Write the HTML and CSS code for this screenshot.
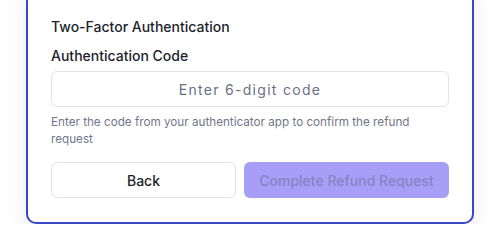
FILE: index.html
```html
<!DOCTYPE html>
<html lang="en">
<head>
  <meta charset="UTF-8">
  <meta name="viewport" content="width=device-width, initial-scale=1.0">
  <title>Two-Factor Authentication</title>
  <link rel="stylesheet" href="styles.css">
</head>
<body>
  <div class="page">
    <div class="card">
      <h3 class="section-title">Two-Factor Authentication</h3>
      <label class="field-label" for="code">Authentication Code</label>
      <input id="code" class="code-input" type="text" placeholder="Enter 6-digit code">
      <p class="help-text">Enter the code from your authenticator app to confirm the refund request</p>
      <div class="actions">
        <button class="btn btn-back">Back</button>
        <button class="btn btn-primary" disabled>Complete Refund Request</button>
      </div>
    </div>
  </div>
</body>
</html>
```

FILE: styles.css
```css
* {
  box-sizing: border-box;
}
body {
  margin: 0;
  background: #ffffff;
  font-family: Inter, "Noto Sans", sans-serif;
  color: #1d1f2b;
}
.page {
  padding: 0 29px 0 26px;
  margin-top: -20px;
}
.card {
  display: flex;
  flex-direction: column;
  width: 448px;
  padding: 36px 23px 24px;
  border: 2px solid #3a46c4;
  border-top: none;
  border-radius: 0 0 10px 10px;
  background: #fff;
  box-shadow: 0 10px 22px rgba(20, 24, 60, 0.08);
}
.section-title {
  margin: 0 0 7px;
  font-size: 14px;
  font-weight: 500;
  line-height: 22px;
}
.field-label {
  font-size: 14px;
  font-weight: 500;
  line-height: 22px;
  margin-bottom: 4px;
}
.code-input {
  height: 36px;
  width: 100%;
  border: 1px solid #e1e3ee;
  border-radius: 6px;
  font-family: inherit;
  font-size: 14px;
  letter-spacing: 1.3px;
  text-align: center;
  color: #1d1f2b;
  outline: none;
}
.code-input::placeholder {
  color: #6a6f86;
}
.help-text {
  margin: 7px 0 0;
  font-size: 11.7px;
  line-height: 17px;
  color: #72768a;
}
.actions {
  display: flex;
  gap: 8px;
  margin-top: 14px;
}
.btn {
  height: 36px;
  border-radius: 6px;
  font-family: inherit;
  font-size: 14px;
  font-weight: 500;
}
.btn-back {
  width: 185px;
  border: 1px solid #e1e3ee;
  background: #fff;
  color: #1d1f2b;
}
.btn-primary {
  flex: 1;
  border: none;
  background: #a59ff8;
  color: #8784c2;
}
```
